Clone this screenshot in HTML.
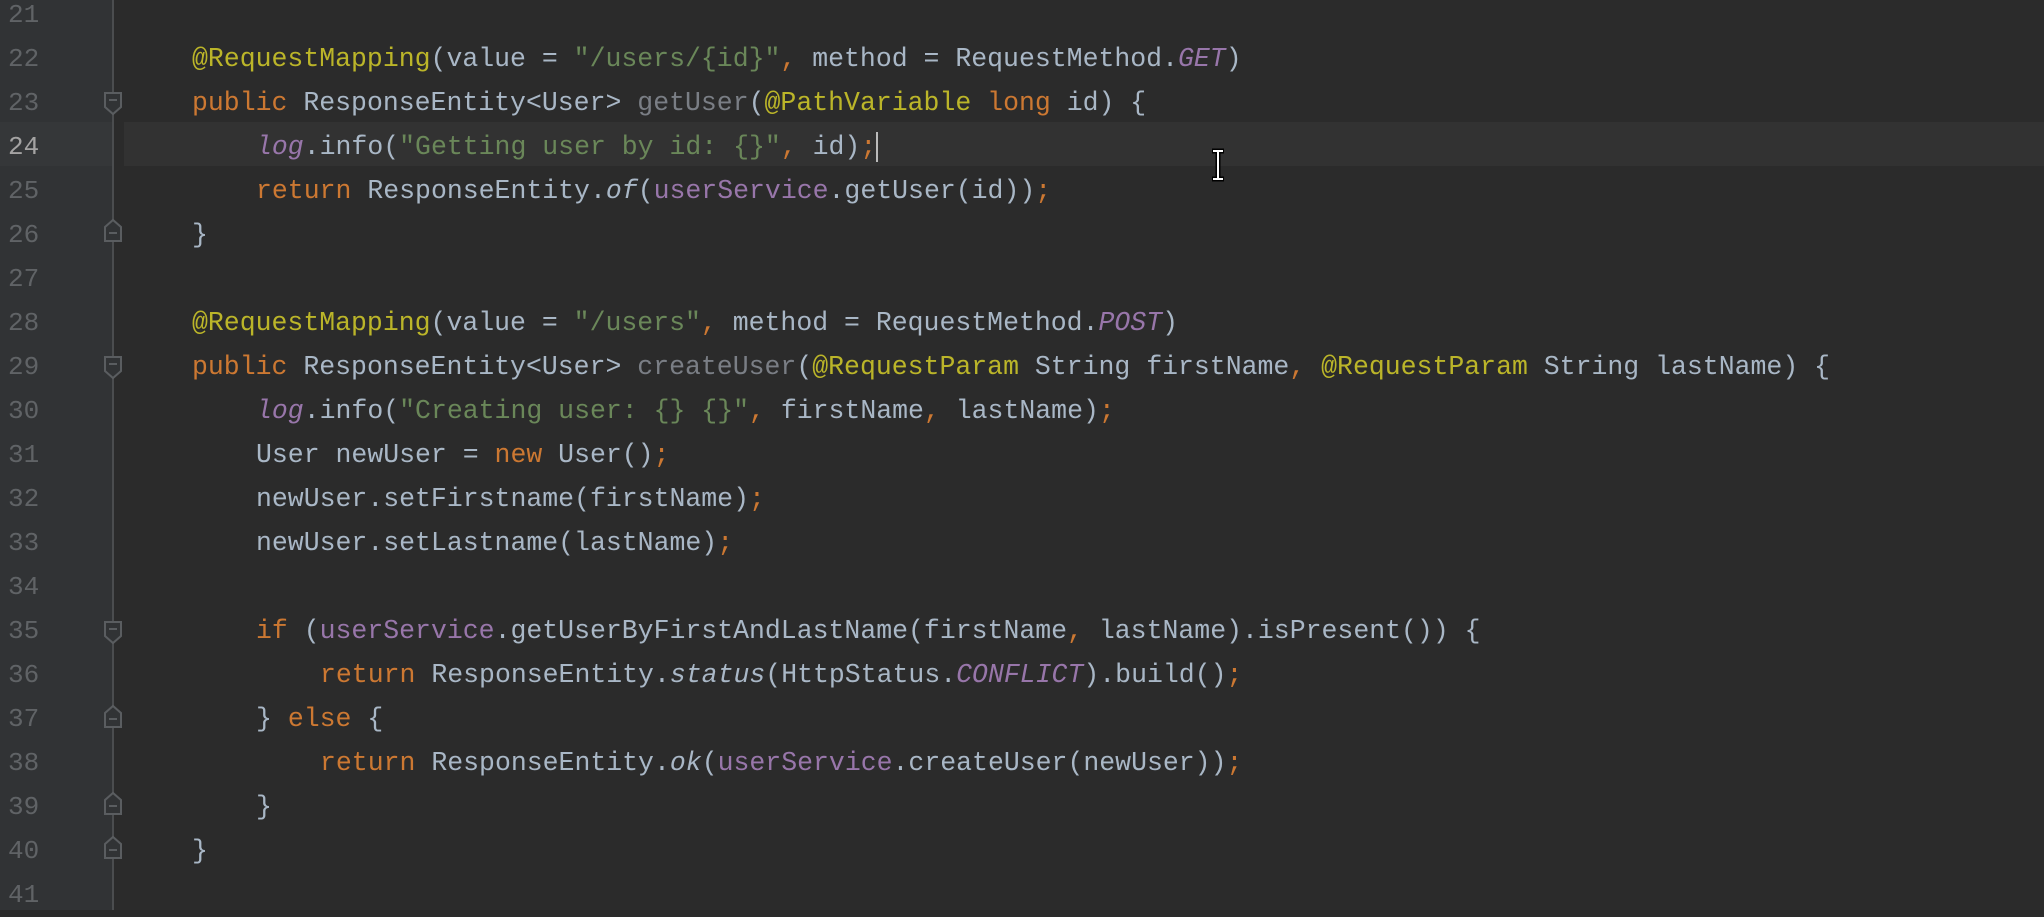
<!DOCTYPE html>
<html><head><meta charset="utf-8"><style>
html,body{margin:0;padding:0;width:2044px;height:910px;overflow:hidden;background:#2b2b2b;}
#g{position:absolute;left:0;top:0;width:113px;height:910px;background:#313335;}
#vl{position:absolute;left:112px;top:0;width:2px;height:910px;background:#4b4d4f;}
.hl{position:absolute;top:122px;height:44px;background:#323232;}
.ln{position:absolute;left:8px;width:40px;font:26px "Liberation Mono",monospace;color:#606366;line-height:44px;}
.cl{position:absolute;left:0;font:26.5px "Liberation Mono",monospace;color:#a9b7c6;line-height:44px;white-space:pre;}
.k{color:#cc7832}.a{color:#bbb529}.s{color:#6a8759}.f{color:#9876aa}.i{font-style:italic}.u{color:#7a7e85}
.fm{position:absolute;left:104px;}
</style></head><body>
<div id="g"></div>
<div class="hl" style="left:0;width:113px;background:#353739"></div>
<div class="hl" style="left:124px;width:1920px"></div>
<div id="vl"></div>
<div class="ln" style="top:-7px">21</div>
<div class="ln" style="top:37px">22</div>
<div class="ln" style="top:81px">23</div>
<div class="ln" style="top:125px;color:#a4a3a3">24</div>
<div class="ln" style="top:169px">25</div>
<div class="ln" style="top:213px">26</div>
<div class="ln" style="top:257px">27</div>
<div class="ln" style="top:301px">28</div>
<div class="ln" style="top:345px">29</div>
<div class="ln" style="top:389px">30</div>
<div class="ln" style="top:433px">31</div>
<div class="ln" style="top:477px">32</div>
<div class="ln" style="top:521px">33</div>
<div class="ln" style="top:565px">34</div>
<div class="ln" style="top:609px">35</div>
<div class="ln" style="top:653px">36</div>
<div class="ln" style="top:697px">37</div>
<div class="ln" style="top:741px">38</div>
<div class="ln" style="top:785px">39</div>
<div class="ln" style="top:829px">40</div>
<div class="ln" style="top:873px">41</div>

<svg class="fm" style="top:0" width="20" height="910" viewBox="104 0 20 910">
<g fill="#313335" stroke="#5a5d60" stroke-width="2">
<path d="M105 93h16v14l-8 7l-8-7z"/><path d="M109 100h8"/>
<path d="M105 241h16v-14l-8-7l-8 7z"/><path d="M109 233h8"/>
<path d="M105 357h16v14l-8 7l-8-7z"/><path d="M109 364h8"/>
<path d="M105 622h16v14l-8 7l-8-7z"/><path d="M109 629h8"/>
<path d="M105 727h16v-14l-8-7l-8 7z"/><path d="M109 719h8"/>
<path d="M105 814h16v-14l-8-7l-8 7z"/><path d="M109 806h8"/>
<path d="M105 858h16v-14l-8-7l-8 7z"/><path d="M109 850h8"/>
</g></svg>

<div class="cl" style="top:37px;left:192px"><span class="a">@RequestMapping</span>(value = <span class="s">"/users/{id}"</span><span class="k">, </span>method = RequestMethod.<span class="f i">GET</span>)</div>
<div class="cl" style="top:81px;left:192px"><span class="k">public </span>ResponseEntity&lt;User&gt; <span class="u">getUser</span>(<span class="a">@PathVariable </span><span class="k">long </span>id) {</div>
<div class="cl" style="top:125px;left:256px"><span class="f i">log</span>.info(<span class="s">"Getting user by id: {}"</span><span class="k">, </span>id)<span class="k">;</span><span style="display:inline-block;width:2px;height:30px;background:#bbb;vertical-align:middle"></span></div>
<div class="cl" style="top:169px;left:256px"><span class="k">return </span>ResponseEntity.<span class="i">of</span>(<span class="f">userService</span>.getUser(id))<span class="k">;</span></div>
<div class="cl" style="top:213px;left:192px">}</div>
<div class="cl" style="top:301px;left:192px"><span class="a">@RequestMapping</span>(value = <span class="s">"/users"</span><span class="k">, </span>method = RequestMethod.<span class="f i">POST</span>)</div>
<div class="cl" style="top:345px;left:192px"><span class="k">public </span>ResponseEntity&lt;User&gt; <span class="u">createUser</span>(<span class="a">@RequestParam </span>String firstName<span class="k">, </span><span class="a">@RequestParam </span>String lastName) {</div>
<div class="cl" style="top:389px;left:256px"><span class="f i">log</span>.info(<span class="s">"Creating user: {} {}"</span><span class="k">, </span>firstName<span class="k">, </span>lastName)<span class="k">;</span></div>
<div class="cl" style="top:433px;left:256px">User newUser = <span class="k">new </span>User()<span class="k">;</span></div>
<div class="cl" style="top:477px;left:256px">newUser.setFirstname(firstName)<span class="k">;</span></div>
<div class="cl" style="top:521px;left:256px">newUser.setLastname(lastName)<span class="k">;</span></div>
<div class="cl" style="top:609px;left:256px"><span class="k">if </span>(<span class="f">userService</span>.getUserByFirstAndLastName(firstName<span class="k">, </span>lastName).isPresent()) {</div>
<div class="cl" style="top:653px;left:320px"><span class="k">return </span>ResponseEntity.<span class="i">status</span>(HttpStatus.<span class="f i">CONFLICT</span>).build()<span class="k">;</span></div>
<div class="cl" style="top:697px;left:256px">} <span class="k">else </span>{</div>
<div class="cl" style="top:741px;left:320px"><span class="k">return </span>ResponseEntity.<span class="i">ok</span>(<span class="f">userService</span>.createUser(newUser))<span class="k">;</span></div>
<div class="cl" style="top:785px;left:256px">}</div>
<div class="cl" style="top:829px;left:192px">}</div>

<svg style="position:absolute;left:1210px;top:148px" width="16" height="34" viewBox="0 0 16 34">
<path d="M2 3h12M8 3v28M2 31h12" stroke="#000" stroke-width="5" fill="none"/>
<path d="M3 3h10M8 3v28M3 31h10" stroke="#fff" stroke-width="2" fill="none"/>
</svg>
</body></html>
